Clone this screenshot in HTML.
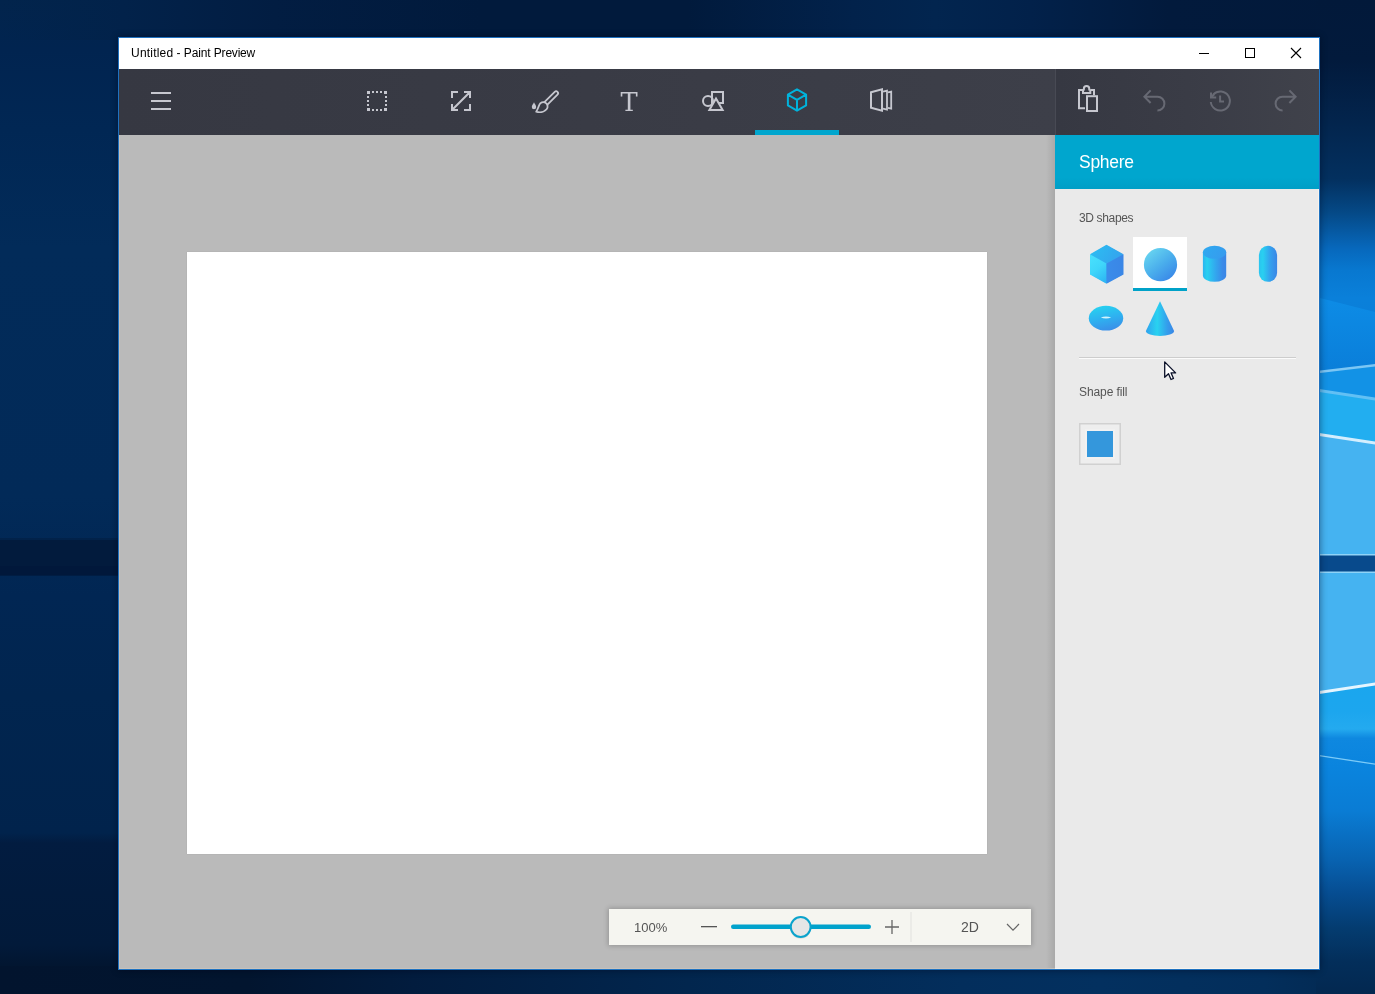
<!DOCTYPE html>
<html lang="en">
<head>
<meta charset="utf-8">
<title>Untitled - Paint Preview</title>
<style>
*{box-sizing:border-box;margin:0;padding:0}
html,body{width:1375px;height:994px;overflow:hidden;background:#02244c;font-family:"Liberation Sans",sans-serif}
#desk{position:absolute;left:0;top:0;width:1375px;height:994px;overflow:hidden}
#wall{position:absolute;left:0;top:0}
#win{position:absolute;left:118px;top:37px;width:1202px;height:933px;border:1px solid #1f72c0;background:#fff;box-shadow:0 0 7px 0 rgba(0,5,20,.45)}
#title{position:absolute;left:0;top:0;width:1200px;height:31px;background:#fff}
#title .t{position:absolute;left:12px;top:8px;font-size:12px;line-height:14px;color:#000;letter-spacing:-0.1px;white-space:nowrap}
#tb{position:absolute;left:0;top:31px;width:936px;height:66px;background:linear-gradient(90deg,#363842 0,#393b45 50%,#3d3f49 100%)}
#tbr{position:absolute;left:936px;top:31px;width:264px;height:66px;background:linear-gradient(90deg,#363842 0,#3a3c46 50%,#40424b 100%);border-left:1px solid #484a54}
#work{position:absolute;left:0;top:97px;width:936px;height:834px;background:linear-gradient(90deg,rgba(0,0,0,0) 0,rgba(0,0,0,0) 927px,rgba(0,0,0,.09) 936px),#bababa}
#paper{position:absolute;left:68px;top:117px;width:800px;height:602px;background:#fff;box-shadow:0 0 1px rgba(0,0,0,.14)}
#side{position:absolute;left:936px;top:97px;width:264px;height:834px;background:#eaeaea}
#head{position:absolute;left:0;top:0;width:264px;height:54px;background:linear-gradient(180deg,#00a6ce 0,#00a6ce 78%,#009ec6 100%)}
#head .t{position:absolute;left:24px;top:17px;font-size:17.5px;line-height:20px;color:#fff;white-space:nowrap;letter-spacing:-0.27px}
.t,.lbl,.pc,.d2{will-change:transform}
.lbl{position:absolute;left:24px;font-size:12px;line-height:14px;color:#555;white-space:nowrap}
#icons{position:absolute;left:0;top:0}
#zoom{position:absolute;left:490px;top:774px;width:422px;height:36px;background:#f5f5f0;box-shadow:0 0 5px 1px rgba(0,0,0,.2)}
#zoom .pc{position:absolute;left:25px;top:11px;font-size:13px;line-height:15px;color:#555}
#zoom .d2{position:absolute;left:352px;top:10px;font-size:14px;line-height:16px;color:#555}
</style>
</head>
<body>
<div id="desk">
<svg id="wall" width="1375" height="994" viewBox="0 0 1375 994">
<defs>
<linearGradient id="wl" x1="0" y1="0" x2="0" y2="1">
<stop offset="0" stop-color="#02244c"/><stop offset=".05" stop-color="#012450"/><stop offset=".13" stop-color="#012754"/><stop offset=".25" stop-color="#022b59"/><stop offset=".5" stop-color="#022a58"/><stop offset=".6" stop-color="#012653"/><stop offset=".7" stop-color="#01254f"/><stop offset=".838" stop-color="#01234c"/><stop offset=".848" stop-color="#021c40"/><stop offset=".95" stop-color="#021a3a"/><stop offset=".975" stop-color="#02152f"/><stop offset="1" stop-color="#02142e"/>
</linearGradient>
<linearGradient id="wt" x1="0" y1="0" x2="1" y2="0">
<stop offset="0" stop-color="#02234a" stop-opacity="0"/><stop offset=".09" stop-color="#02224a"/><stop offset=".2" stop-color="#021d42"/><stop offset=".35" stop-color="#011a3c"/><stop offset=".5" stop-color="#011a3c"/><stop offset=".62" stop-color="#02224b"/><stop offset=".68" stop-color="#02254f"/><stop offset=".75" stop-color="#02214a"/><stop offset=".85" stop-color="#021a3c"/><stop offset="1" stop-color="#02193a"/>
</linearGradient>
<linearGradient id="wb" x1="0" y1="0" x2="1" y2="0">
<stop offset="0" stop-color="#02142e"/><stop offset=".18" stop-color="#02152f"/><stop offset=".3" stop-color="#021c3e"/><stop offset=".5" stop-color="#02264e"/><stop offset=".7" stop-color="#032e5c"/><stop offset=".8" stop-color="#03305f"/><stop offset=".92" stop-color="#032e5b"/><stop offset="1" stop-color="#03284f"/>
</linearGradient>
<linearGradient id="wr" x1="0" y1="0" x2="0" y2="1">
<stop offset="0" stop-color="#02193a"/><stop offset=".06" stop-color="#021a3c"/><stop offset=".12" stop-color="#03244c"/><stop offset=".18" stop-color="#03305f"/><stop offset=".215" stop-color="#054a88"/><stop offset=".25" stop-color="#0768bc"/><stop offset=".272" stop-color="#0878d0"/><stop offset=".3" stop-color="#0a80da"/><stop offset=".37" stop-color="#0a7cd8"/>
</linearGradient>
<linearGradient id="wr3" x1="0" y1="0" x2="0" y2="1"><stop offset="0" stop-color="#0d8ce6"/><stop offset="1" stop-color="#0a7ed9"/></linearGradient>
<linearGradient id="wr2" x1="0" y1="0" x2="0" y2="1">
<stop offset="0" stop-color="#1aa6ee"/><stop offset=".09" stop-color="#1ca6ee"/><stop offset=".145" stop-color="#24aaef"/><stop offset=".175" stop-color="#0e88e0"/><stop offset=".27" stop-color="#0a84de"/><stop offset=".41" stop-color="#0a7cd4"/><stop offset=".57" stop-color="#0862b0"/><stop offset=".68" stop-color="#064c90"/><stop offset=".787" stop-color="#043c70"/><stop offset=".897" stop-color="#032e5a"/><stop offset="1" stop-color="#032850"/>
</linearGradient>
</defs>
<rect x="0" y="0" width="1375" height="994" fill="url(#wl)"/>
<rect x="0" y="538" width="130" height="3" fill="#021b3d" opacity=".5"/><rect x="0" y="540" width="130" height="35.5" fill="#021b3d"/><rect x="0" y="566" width="130" height="9.5" fill="#01183a" opacity=".6"/>
<rect x="0" y="0" width="1375" height="40" fill="url(#wt)"/>
<rect x="0" y="966" width="1375" height="28" fill="url(#wb)"/>
<g>
<rect x="1316" y="0" width="59" height="994" fill="url(#wr)"/>
<polygon points="1316,297 1375,312 1375,366 1316,373" fill="url(#wr3)"/>
<polygon points="1316,372 1375,365 1375,399 1316,390" fill="#1292e6"/>
<polygon points="1316,390 1375,399 1375,443 1316,434" fill="#22aef0"/>
<polygon points="1316,434 1375,443 1375,684 1316,693" fill="#45b3f1"/>
<rect x="1316" y="555" width="59" height="17" fill="#084a8c"/>
<rect x="1316" y="554" width="59" height="1.5" fill="#8fd3f8"/>
<rect x="1316" y="571.5" width="59" height="1.5" fill="#8fd3f8"/>
<polygon points="1316,693 1375,684 1375,994 1316,994" fill="url(#wr2)"/>
<polygon points="1316,371 1375,364 1375,366.5 1316,373.5" fill="#7cc6f4"/>
<polygon points="1316,388.5 1375,397.5 1375,400.5 1316,391.5" fill="#62c0f4"/>
<polygon points="1316,432.5 1375,441.5 1375,444.5 1316,435.5" fill="#d4eefe"/>
<polygon points="1316,691.5 1375,682.5 1375,685.5 1316,694.5" fill="#e4f5ff"/>
<polygon points="1316,754.5 1375,763.5 1375,764.8 1316,755.8" fill="#7ccbf8"/>
</g>
</svg>
<div id="win">
  <div id="title"><div class="t"><span style="letter-spacing:.21px">Untitled</span> - Paint <span style="letter-spacing:-.21px">Preview</span></div></div>
  <div id="tb"></div>
  <div id="tbr"></div>
  <div id="work">
    <div id="paper"></div>
    <div id="zoom"><div class="pc">100%</div><div class="d2">2D</div></div>
  </div>
  <div id="side">
    <div id="head"><div class="t">Sphere</div></div>
    <div class="lbl" style="top:76px;letter-spacing:-0.35px">3D shapes</div>
    <div class="lbl" style="top:250px;letter-spacing:-0.1px">Shape fill</div>
  </div>
</div>
<svg id="icons" width="1375" height="994" viewBox="0 0 1375 994">
<g fill="#c6c7cf">
<!-- hamburger -->
<rect x="151" y="92" width="20" height="2"/><rect x="151" y="100" width="20" height="2"/><rect x="151" y="108" width="20" height="2"/>
<!-- select (dotted square) -->
<rect x="367" y="91" width="3" height="3"/><rect x="384" y="91" width="3" height="3"/><rect x="367" y="108" width="3" height="3"/><rect x="384" y="108" width="3" height="3"/>
<rect x="372" y="91" width="2" height="2"/><rect x="376" y="91" width="2" height="2"/><rect x="380" y="91" width="2" height="2"/>
<rect x="372" y="109" width="2" height="2"/><rect x="376" y="109" width="2" height="2"/><rect x="380" y="109" width="2" height="2"/>
<rect x="367" y="96" width="2" height="2"/><rect x="367" y="100" width="2" height="2"/><rect x="367" y="104" width="2" height="2"/>
<rect x="385" y="96" width="2" height="2"/><rect x="385" y="100" width="2" height="2"/><rect x="385" y="104" width="2" height="2"/>
</g>
<!-- crop / resize -->
<g fill="none" stroke="#c6c7cf" stroke-width="2">
<path d="M452,98 V92 H458 M464,92 H470 V98 M452,104 V110 H458 M464,110 H470 V104 M452.5,109.5 L469.5,92.5"/>
</g>
<!-- brush -->
<g fill="none" stroke="#c6c7cf" stroke-width="1.8" stroke-linejoin="round">
<path d="M544.15,102.39 L554.72,91.82 A1.95,1.95 0 0 1 557.48,94.58 L547.18,104.88"/>
<path d="M536.2,111.7 C537.2,110.2 538,108.5 539.26,105.03 A4.3,4.3 0 1 1 546.59,109.26 C545.3,110.8 541.5,113.2 536.2,111.7 Z"/>
</g>
<path d="M534,102.2 C535,104.2 536.2,105.6 536.2,107 A2.2,2.2 0 0 1 531.8,107 C531.8,105.6 533,104.2 534,102.2 Z" fill="#c6c7cf"/>
<!-- text tool -->
<text id="ticon" x="629" y="111" text-anchor="middle" font-family="'DejaVu Serif','Liberation Serif',serif" font-size="25.8" fill="#c6c7cf">T</text>
<rect x="755" y="130" width="84" height="5" fill="#00a6ce"/>
<!-- shapes -->
<g fill="none" stroke="#c6c7cf" stroke-width="2">
<rect x="712" y="92" width="11" height="11"/>
<circle cx="708" cy="101.1" r="5"/>
<path d="M716,98.6 L722.6,110 H709.4 Z" fill="#3a3c46"/>
</g>
<!-- 3d cube (active) -->
<g fill="none" stroke="#00b3dc" stroke-width="2" stroke-linejoin="round">
<path d="M797,89.3 L806.1,94.6 V105.4 L797,110.7 L787.9,105.4 V94.6 Z M787.9,94.6 L797,99.9 L806.1,94.6 M797,99.9 V110.7"/>
</g>
<!-- canvas / panels -->
<g fill="none" stroke="#c6c7cf" stroke-width="2" stroke-linejoin="miter">
<path d="M871,92.2 L882,89.4 V110.8 L871,107.8 Z"/>
<path d="M883,91.6 L887,90.6 V109.6 L883,108.6" stroke-width="1.8"/>
<path d="M888,92.4 L891.2,91.6 V108.6 L888,107.8" stroke-width="1.8"/>
</g>
<!-- paste -->
<g fill="none" stroke="#c6c7cf" stroke-width="2">
<path d="M1083,90 H1079 V108.2 H1085 M1090.3,90 H1094 V95.2"/>
<path d="M1083,89.5 V93 H1090.3 V89.5" />
<path d="M1083.85,90.6 V88.7 A2.7,2.7 0 0 1 1089.25,88.7 V90.6" stroke-width="2"/>
<rect x="1087" y="96.2" width="10" height="14.8"/>
</g>
<!-- undo / history / redo (disabled) -->
<g fill="none" stroke="#676973" stroke-width="2">
<path d="M1150.6,90.4 L1144.4,96.7 L1150.6,103 M1144.6,96.7 H1157.6 A6.9,6.9 0 0 1 1157.4,110.5"/>
<path d="M1289.4,90.4 L1295.6,96.7 L1289.4,103 M1295.4,96.7 H1282.4 A6.9,6.9 0 0 0 1282.6,110.5"/>
<path d="M1210.8,102 A9.55,9.55 0 1 0 1213.4,94.4"/>
<path d="M1220.1,95.4 V101.5 H1224" stroke-width="2"/>
<path d="M1211,92.4 V97.6 H1216.2" stroke-width="2"/>
<path d="M1214.2,94 L1211.4,97.2" stroke-width="2.2"/>
</g>
<!-- side panel content -->
<defs>
<linearGradient id="gS" x1="0.15" y1="0.1" x2="0.85" y2="0.95"><stop offset="0" stop-color="#66d3f0"/><stop offset=".5" stop-color="#4aaeec"/><stop offset="1" stop-color="#3886e8"/></linearGradient>
<linearGradient id="gTop" x1="0" y1="0" x2="1" y2="0.4"><stop offset="0" stop-color="#2bc0f2"/><stop offset="1" stop-color="#34a4ee"/></linearGradient>
<linearGradient id="gLeft" x1="0.2" y1="0" x2="0.65" y2="1"><stop offset="0" stop-color="#48e0fd"/><stop offset=".5" stop-color="#3fd6fa"/><stop offset="1" stop-color="#2fb8f4"/></linearGradient>
<linearGradient id="gRight" x1="0" y1="0" x2="1" y2="0"><stop offset="0" stop-color="#3a8cea"/><stop offset="1" stop-color="#3a86e6"/></linearGradient>
<linearGradient id="gCyl" x1="0" y1="0" x2="1" y2="0"><stop offset="0" stop-color="#2cb4f0"/><stop offset=".18" stop-color="#29d0f0"/><stop offset=".55" stop-color="#33a6ee"/><stop offset=".85" stop-color="#3a8ae8"/><stop offset="1" stop-color="#3a86e6"/></linearGradient>
<linearGradient id="gCylTop" x1="0" y1="0" x2="1" y2="0.3"><stop offset="0" stop-color="#2eaaf0"/><stop offset="1" stop-color="#369cee"/></linearGradient>
<linearGradient id="gCap" x1="0" y1="0" x2="1" y2="0"><stop offset="0" stop-color="#2bc4f0"/><stop offset=".22" stop-color="#29d0f0"/><stop offset=".6" stop-color="#34a2ee"/><stop offset="1" stop-color="#3a86e6"/></linearGradient>
<linearGradient id="gTor" x1="0.3" y1="0" x2="0.6" y2="1"><stop offset="0" stop-color="#27d2f0"/><stop offset=".5" stop-color="#2eb2f0"/><stop offset="1" stop-color="#3a8ee8"/></linearGradient>
<linearGradient id="gCone" x1="0" y1="0" x2="1" y2="0"><stop offset="0" stop-color="#30a2ee"/><stop offset=".4" stop-color="#29d2f0"/><stop offset=".75" stop-color="#349eec"/><stop offset="1" stop-color="#3a86e6"/></linearGradient>
</defs>
<!-- selected tile -->
<rect x="1133" y="237" width="54" height="54" fill="#fff"/>
<rect x="1133" y="288" width="54" height="3" fill="#00a2c8"/>
<!-- cube -->
<polygon points="1106.5,245.2 1123,254.4 1123,274.3 1106.5,283.2 1090.5,274.3 1090.5,254.4" fill="#37a6ee"/>
<polygon points="1106.5,244.7 1123.5,254.2 1106.5,263.6 1090,254.2" fill="url(#gTop)"/>
<polygon points="1090,254.2 1106.5,263.6 1106.5,283.7 1090,274.5" fill="url(#gLeft)"/>
<polygon points="1106.5,263.6 1123.5,254.2 1123.5,274.5 1106.5,283.7" fill="url(#gRight)"/>
<!-- sphere -->
<circle cx="1160.5" cy="264.7" r="16.6" fill="url(#gS)"/>
<!-- cylinder -->
<path d="M1202.9,252.3 V275.4 A11.65,6.4 0 0 0 1226.2,275.4 V252.3 Z" fill="url(#gCyl)"/>
<ellipse cx="1214.55" cy="252.3" rx="11.65" ry="6.5" fill="url(#gCylTop)"/>
<!-- capsule -->
<rect x="1258.9" y="245.8" width="18.2" height="36" rx="9.1" ry="9.1" fill="url(#gCap)"/>
<!-- torus -->
<ellipse cx="1106" cy="318.2" rx="17.2" ry="12.4" fill="url(#gTor)"/>
<path d="M1100.8,317.5 Q1106,315.5 1111.2,317.5 Q1106,319.5 1100.8,317.5 Z" fill="#d2f4fc"/>
<!-- cone -->
<path d="M1160,301.2 L1174.1,331 A14.1,5 0 0 1 1145.9,331 Z" fill="url(#gCone)"/>
<!-- separator -->
<rect x="1079" y="357" width="217" height="1" fill="#cdcdcd"/>
<rect x="1079" y="358" width="217" height="1" fill="#fbfbfb"/>
<!-- shape fill swatch -->
<rect x="1079.75" y="423.75" width="40.5" height="40.5" fill="#eeeeee" stroke="#d1d1d1" stroke-width="1.5"/>
<rect x="1085" y="429" width="30" height="30" fill="#f1f1f1"/>
<rect x="1087" y="431" width="26" height="26" fill="#3497dc"/>
<!-- zoom bar controls -->
<rect x="701" y="926" width="16" height="1.3" fill="#555"/>
<rect x="731" y="924.6" width="140" height="4.4" rx="2.2" fill="#00a2cc"/>
<ellipse cx="800.7" cy="929.5" rx="10" ry="9.5" fill="rgba(0,0,0,.08)"/>
<circle cx="800.7" cy="927" r="9.9" fill="#e6e6e6" stroke="#0ba3cc" stroke-width="2"/>
<path d="M885,927 H899 M892,920 V934" stroke="#666" stroke-width="1.3" fill="none"/>
<rect x="910.5" y="912" width="1" height="30" fill="#e2e2dd"/>
<path d="M1007,924 L1013,930.2 L1019,924" stroke="#666" stroke-width="1.2" fill="none"/>
<!-- mouse cursor -->
<path d="M1164.7,361.9 V377.3 L1168.5,373.8 L1171,379.5 L1173.5,378.4 L1171.1,372.9 H1175.6 Z" fill="#fff" stroke="#0a1028" stroke-width="1.3" stroke-linejoin="round"/>
<!-- inner edge highlights -->
<rect x="119" y="135" width="1" height="834" fill="#c6c0ba"/>
<rect x="119" y="968" width="936" height="1" fill="#c8c2bb"/>
<rect x="1055" y="968" width="264" height="1" fill="#f7f3ed"/>
<rect x="1318" y="189" width="1" height="780" fill="#f7f3ed"/>
<!-- window buttons -->
<g fill="none" stroke="#000" stroke-width="1">
<path d="M1199,53.5 H1209"/>
<rect x="1245.5" y="48.5" width="9" height="9"/>
<path d="M1291,48 L1301,58 M1301,48 L1291,58" stroke-width="1.1"/>
</g>
</svg>
</div>
</body>
</html>
